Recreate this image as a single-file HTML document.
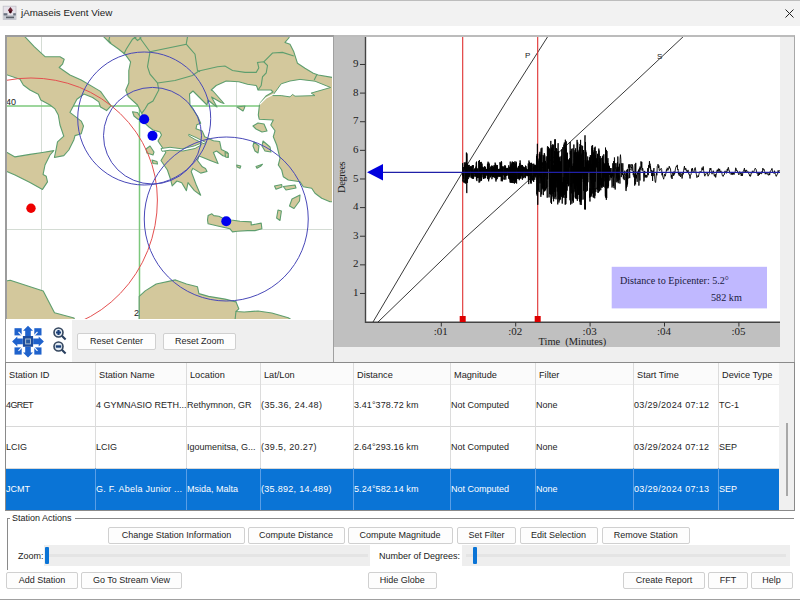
<!DOCTYPE html>
<html><head><meta charset="utf-8"><style>
html,body{margin:0;padding:0;width:800px;height:600px;overflow:hidden;background:#fff;font-family:"Liberation Sans", sans-serif}
.t{position:absolute;white-space:pre;line-height:1;font-family:"Liberation Sans", sans-serif}
.btn{position:absolute;box-sizing:border-box;border:1px solid #d0d0d0;border-radius:2px;background:#fdfdfd;text-align:center;color:#1e1e1e;font-family:"Liberation Sans", sans-serif;white-space:pre}
</style></head><body>
<div style="position:absolute;left:0;top:0;width:800px;height:26px;background:#f2f2f2;border-top:1px solid #bdbdbd;box-sizing:border-box"></div>
<svg width="20" height="24" style="position:absolute;left:0;top:0">
<rect x="3.2" y="6.2" width="12.8" height="13.4" fill="#e6e2ea" stroke="#c0c0c8" stroke-width="0.8"/>
<rect x="3.6" y="15" width="12" height="4.3" fill="#c4c8d0"/>
<rect x="3.6" y="13.2" width="3.8" height="2.2" fill="#68707e"/>
<rect x="13.2" y="13.2" width="2.6" height="2.2" fill="#68707e"/>
<rect x="6" y="16.6" width="8" height="1.6" fill="#5a606a"/>
<polygon points="10.4,7 12.9,10.3 10.4,13.6 7.9,10.3" fill="#6a2030"/>
<circle cx="10.4" cy="12" r="1.2" fill="#3a0a14"/>
</svg>
<div class="t" style="left:21px;top:8px;font-size:9.8px;color:#1a1a1a;">jAmaseis Event View</div>
<svg width="10" height="10" style="position:absolute;left:785px;top:9px"><path d="M0.5,0.5 L8.5,8.5 M8.5,0.5 L0.5,8.5" stroke="#222" stroke-width="1"/></svg>
<svg width="800" height="600" style="position:absolute;left:0;top:0">
<defs><clipPath id="mc"><rect x="6" y="36" width="326" height="283"/></clipPath></defs>
<g clip-path="url(#mc)">
<rect x="0" y="0" width="800" height="600" fill="#ffffff"/>
<line x1="41.5" y1="30" x2="41.5" y2="330" stroke="#d4dcd4" stroke-width="1"/>
<line x1="236.5" y1="30" x2="236.5" y2="330" stroke="#d4dcd4" stroke-width="1"/>
<line x1="0" y1="229.5" x2="340" y2="229.5" stroke="#d4dcd4" stroke-width="1"/>
<line x1="139.5" y1="30" x2="139.5" y2="330" stroke="#7cc87c" stroke-width="1.5"/>
<line x1="0" y1="106" x2="340" y2="106" stroke="#7cc87c" stroke-width="1.5"/>
<polygon points="5.0,35.0 23.3,35.0 34.2,46.7 45.0,56.7 60.0,56.7 64.2,59.2 62.5,64.2 59.2,67.5 70.0,75.0 81.2,80.0 100.5,91.4 104.9,97.5 111.0,105.8 106.6,110.6 100.5,107.1 98.8,101.9 92.6,97.5 83.9,94.0 76.9,99.2 69.9,112.4 81.2,121.1 83.5,126.0 81.2,133.8 75.0,135.6 73.8,140.0 68.8,150.0 63.8,155.6 54.4,157.5 56.2,148.8 57.5,141.9 63.8,136.2 60.0,125.0 58.3,115.0 55.0,108.9 50.0,105.0 40.8,100.0 38.3,94.2 30.0,90.0 23.3,85.0 20.0,79.2 5.0,74.2" fill="#d3c89c" stroke="#5e9e6e" stroke-width="1.1" stroke-linejoin="round"/>
<polygon points="5.0,151.2 15.0,156.9 30.0,154.4 42.5,152.5 53.8,150.6 50.0,155.0 45.0,165.0 43.1,174.4 46.2,176.2 47.5,181.9 42.5,189.4 30.0,182.5 15.0,175.0 5.0,170.6" fill="#d3c89c" stroke="#5e9e6e" stroke-width="1.1" stroke-linejoin="round"/>
<polygon points="100.0,35.0 290.0,35.0 288.8,38.0 285.0,42.4 290.0,44.2 293.8,51.8 297.5,63.3 305.0,68.3 313.3,73.3 318.3,75.0 333.0,77.5 333.0,201.7 330.0,201.7 321.7,198.3 315.0,193.3 311.7,188.3 303.3,186.7 300.0,181.7 288.3,180.0 283.3,176.7 281.7,170.0 278.3,165.0 280.0,158.3 276.7,145.0 273.3,136.7 275.0,130.8 270.8,125.0 273.3,120.0 259.2,119.2 258.3,115.0 259.5,104.5 261.0,102.0 266.0,96.0 273.0,92.0 271.0,90.0 258.0,90.0 257.0,87.0 256.2,85.5 247.5,84.2 238.8,81.8 226.2,81.0 216.2,85.5 211.2,90.0 213.0,91.0 224.0,103.5 221.0,102.5 211.5,97.0 217.0,107.0 213.5,104.5 208.0,100.0 207.0,105.0 195.0,93.0 193.0,91.0 189.5,94.0 190.0,105.0 192.0,108.0 197.5,116.0 200.7,123.2 196.8,124.8 196.0,128.8 202.3,131.1 204.7,136.7 213.4,140.7 219.7,141.5 221.3,149.4 227.6,152.5 228.4,157.3 222.9,155.7 216.6,151.0 213.4,152.5 218.1,163.6 210.2,160.5 202.3,157.3 199.0,156.0 197.5,160.5 202.3,166.8 205.5,168.4 207.0,171.5 200.7,173.1 192.8,168.4 191.2,171.5 196.0,184.2 200.7,195.3 194.4,190.6 188.0,182.7 186.4,190.6 181.7,182.7 176.9,181.0 172.2,185.8 170.6,179.5 167.4,170.0 161.0,160.5 165.8,152.5 162.0,147.0 158.0,141.0 161.5,135.0 160.0,132.0 153.0,130.0 149.0,127.0 145.0,123.3 141.7,113.3 140.0,110.0 137.5,105.0 128.3,96.7 125.8,90.0 128.8,83.0 128.8,70.5 130.6,61.8 125.0,54.2 118.8,49.2 110.0,43.0 103.8,36.8 100.0,35.5" fill="#d3c89c" stroke="#5e9e6e" stroke-width="1.1" stroke-linejoin="round"/>
<polygon points="5.0,281.2 10.2,280.2 43.2,291.0 54.5,312.7 74.0,318.0 76.0,325.0 5.0,325.0" fill="#d3c89c" stroke="#5e9e6e" stroke-width="1.1" stroke-linejoin="round"/>
<polygon points="139.2,296.4 145.2,290.9 156.2,284.0 175.5,279.9 186.5,284.0 197.5,286.8 198.9,293.6 208.5,296.4 225.0,299.1 236.0,301.9 238.8,308.8 236.0,311.5 244.2,312.0 258.0,311.0 271.8,313.0 288.2,317.8 300.0,325.0 139.2,325.0" fill="#d3c89c" stroke="#5e9e6e" stroke-width="1.1" stroke-linejoin="round"/>
<polygon points="132.5,111.7 137.5,112.5 141.0,118.3 138.3,119.5 134.0,116.0" fill="#d3c89c" stroke="#5e9e6e" stroke-width="1.1" stroke-linejoin="round"/>
<polygon points="146.0,149.0 150.0,146.0 154.0,152.0 153.0,155.0 147.0,153.0" fill="#d3c89c" stroke="#5e9e6e" stroke-width="1.1" stroke-linejoin="round"/>
<polygon points="152.0,160.0 157.0,161.5 157.5,164.0 153.0,163.5" fill="#d3c89c" stroke="#5e9e6e" stroke-width="1.1" stroke-linejoin="round"/>
<polygon points="237.0,107.0 245.0,106.0 244.0,109.0 243.0,111.0 240.0,109.0" fill="#d3c89c" stroke="#5e9e6e" stroke-width="1.1" stroke-linejoin="round"/>
<polygon points="253.0,126.0 258.0,123.0 264.0,124.0 267.0,131.0 262.0,132.0 256.0,129.0" fill="#d3c89c" stroke="#5e9e6e" stroke-width="1.1" stroke-linejoin="round"/>
<polygon points="254.0,142.0 259.0,146.0 258.0,153.0 255.0,151.0 253.0,146.0" fill="#d3c89c" stroke="#5e9e6e" stroke-width="1.1" stroke-linejoin="round"/>
<polygon points="263.0,141.0 270.0,147.0 271.0,152.0 265.0,151.0 262.0,146.0" fill="#d3c89c" stroke="#5e9e6e" stroke-width="1.1" stroke-linejoin="round"/>
<polygon points="225.0,152.5 228.3,153.5 228.0,157.5 225.5,157.0" fill="#d3c89c" stroke="#5e9e6e" stroke-width="1.1" stroke-linejoin="round"/>
<polygon points="236.7,165.0 240.8,166.0 240.0,168.3 237.0,167.0" fill="#d3c89c" stroke="#5e9e6e" stroke-width="1.1" stroke-linejoin="round"/>
<polygon points="256.0,166.5 262.5,164.2 261.0,166.0 257.0,168.3" fill="#d3c89c" stroke="#5e9e6e" stroke-width="1.1" stroke-linejoin="round"/>
<polygon points="274.5,186.0 281.7,184.5 282.0,187.0 276.0,189.2" fill="#d3c89c" stroke="#5e9e6e" stroke-width="1.1" stroke-linejoin="round"/>
<polygon points="283.3,186.5 295.0,185.0 296.0,188.0 286.0,190.0" fill="#d3c89c" stroke="#5e9e6e" stroke-width="1.1" stroke-linejoin="round"/>
<polygon points="292.0,199.0 300.0,195.0 299.5,201.0 294.0,208.5 289.5,206.0" fill="#d3c89c" stroke="#5e9e6e" stroke-width="1.1" stroke-linejoin="round"/>
<polygon points="278.0,210.0 281.4,211.0 280.0,220.5 276.6,218.0" fill="#d3c89c" stroke="#5e9e6e" stroke-width="1.1" stroke-linejoin="round"/>
<polygon points="208.1,215.6 211.9,213.8 213.8,215.6 218.8,216.2 222.5,218.1 231.2,220.0 240.0,221.2 251.2,221.9 251.2,225.0 261.2,223.1 261.9,228.8 255.0,230.6 247.5,230.6 237.5,231.2 232.5,231.9 230.0,228.8 218.8,226.2 208.1,223.8 207.5,220.0" fill="#d3c89c" stroke="#5e9e6e" stroke-width="1.1" stroke-linejoin="round"/>
<polygon points="161.0,148.5 170.0,147.3 182.0,148.8 194.0,146.0 200.7,143.3 201.5,144.8 195.0,148.5 183.0,151.0 170.0,150.2 162.0,151.3" fill="#ffffff" stroke="#5e9e6e" stroke-width="1"/>
<polygon points="188.8,134.3 196.0,137.5 205.5,142.3 204.5,144.0 195.0,139.5 188.8,135.8" fill="#ffffff" stroke="#5e9e6e" stroke-width="1"/>
<polygon points="272.5,95.6 276.0,91.0 281.2,83.8 290.0,81.0 300.0,79.4 315.0,81.2 330.6,87.5 311.2,93.1 315.0,95.6 295.0,96.2 292.5,94.4 290.0,96.9 281.2,95.6" fill="#ffffff" stroke="#5e9e6e" stroke-width="1"/>
<polyline points="259.5,104.5 266,98 274,94" fill="none" stroke="#ffffff" stroke-width="1.2"/>
<polyline points="110.0,35.5 108.8,40.5 111.0,43.0" fill="none" stroke="#5e9e6e" stroke-width="1.1"/>
<polyline points="137.5,36.0 132.5,39.2 126.2,49.2 123.8,54.2" fill="none" stroke="#5e9e6e" stroke-width="1.1"/>
<polyline points="134.0,37.0 137.5,40.5 141.0,38.0 138.8,36.0" fill="none" stroke="#5e9e6e" stroke-width="1.1"/>
<polyline points="140.0,38.0 150.0,51.8 147.5,66.8 150.0,74.2 157.5,83.0 158.8,90.0 153.0,101.0 148.0,104.0 145.0,109.0 141.7,113.3" fill="none" stroke="#5e9e6e" stroke-width="1.1"/>
<polyline points="150.0,51.8 186.2,44.2 187.5,36.8 186.2,35.0" fill="none" stroke="#5e9e6e" stroke-width="1.1"/>
<polyline points="186.2,44.2 195.0,54.2 197.5,70.5 200.0,71.8" fill="none" stroke="#5e9e6e" stroke-width="1.1"/>
<polyline points="157.5,83.0 175.0,80.5 192.5,75.5 198.8,71.0" fill="none" stroke="#5e9e6e" stroke-width="1.1"/>
<polyline points="198.8,71.0 217.5,66.8 225.0,66.0 232.5,70.5 245.0,72.4 256.2,72.4 258.8,68.0 257.5,62.4 263.8,61.8 267.5,65.5 266.2,73.0 262.5,76.8 261.2,85.5 258.0,90.0" fill="none" stroke="#5e9e6e" stroke-width="1.1"/>
<polyline points="263.8,61.8 272.5,53.0 282.5,52.4 293.8,56.0" fill="none" stroke="#5e9e6e" stroke-width="1.1"/>
<polyline points="316.7,75.0 314.2,80.0" fill="none" stroke="#5e9e6e" stroke-width="1.1"/>
<polyline points="236.0,311.5 235.0,320.0" fill="none" stroke="#5e9e6e" stroke-width="1.1"/>
<text x="6" y="104.5" font-family="Liberation Sans" font-size="9" fill="#222">40</text>
<text x="134" y="316" font-family="Liberation Sans" font-size="9" fill="#222">2</text>
<path d="M -95.4,200 A 126.4 122 0 0 1 157.4,200 A 126.4 132 0 0 1 -95.4,200" fill="none" stroke="#e45050" stroke-width="1"/>
<ellipse cx="144.2" cy="118.5" rx="66.5" ry="66.5" fill="none" stroke="#4848b8" stroke-width="1"/>
<ellipse cx="152.5" cy="135.7" rx="49" ry="48.3" fill="none" stroke="#4848b8" stroke-width="1"/>
<circle cx="226.25" cy="219" r="82" fill="none" stroke="#4848b8" stroke-width="1"/>
<circle cx="31" cy="208.3" r="4.7" fill="#ee0000"/>
<circle cx="144.2" cy="119.2" r="5" fill="#0000ee"/>
<circle cx="152.5" cy="135.8" r="5" fill="#0000ee"/>
<circle cx="226.25" cy="221.25" r="5" fill="#0000ee"/>
</g></svg>
<svg width="800" height="600" style="position:absolute;left:0;top:0">
<rect x="333" y="35" width="462" height="328" fill="#efefef"/>
<rect x="333" y="36" width="447" height="311" fill="#c0c0c0"/>
<rect x="366" y="36" width="414" height="286" fill="#ffffff"/>
<line x1="365.5" y1="35" x2="365.5" y2="323" stroke="#444" stroke-width="1.4"/>
<line x1="365" y1="322.2" x2="780" y2="322.2" stroke="#444" stroke-width="1.4"/>
<line x1="360" y1="293.48" x2="365" y2="293.48" stroke="#333" stroke-width="1"/>
<text x="358.5" y="296.08" text-anchor="end" font-family="Liberation Serif" font-size="11" fill="#222">1</text>
<line x1="360" y1="264.85" x2="365" y2="264.85" stroke="#333" stroke-width="1"/>
<text x="358.5" y="267.45" text-anchor="end" font-family="Liberation Serif" font-size="11" fill="#222">2</text>
<line x1="360" y1="236.23" x2="365" y2="236.23" stroke="#333" stroke-width="1"/>
<text x="358.5" y="238.83" text-anchor="end" font-family="Liberation Serif" font-size="11" fill="#222">3</text>
<line x1="360" y1="207.60" x2="365" y2="207.60" stroke="#333" stroke-width="1"/>
<text x="358.5" y="210.20" text-anchor="end" font-family="Liberation Serif" font-size="11" fill="#222">4</text>
<line x1="360" y1="178.98" x2="365" y2="178.98" stroke="#333" stroke-width="1"/>
<text x="358.5" y="181.58" text-anchor="end" font-family="Liberation Serif" font-size="11" fill="#222">5</text>
<line x1="360" y1="150.35" x2="365" y2="150.35" stroke="#333" stroke-width="1"/>
<text x="358.5" y="152.95" text-anchor="end" font-family="Liberation Serif" font-size="11" fill="#222">6</text>
<line x1="360" y1="121.73" x2="365" y2="121.73" stroke="#333" stroke-width="1"/>
<text x="358.5" y="124.33" text-anchor="end" font-family="Liberation Serif" font-size="11" fill="#222">7</text>
<line x1="360" y1="93.10" x2="365" y2="93.10" stroke="#333" stroke-width="1"/>
<text x="358.5" y="95.70" text-anchor="end" font-family="Liberation Serif" font-size="11" fill="#222">8</text>
<line x1="360" y1="64.48" x2="365" y2="64.48" stroke="#333" stroke-width="1"/>
<text x="358.5" y="67.08" text-anchor="end" font-family="Liberation Serif" font-size="11" fill="#222">9</text>
<text transform="translate(344.5,193) rotate(-90)" font-family="Liberation Serif" font-size="10.5" letter-spacing="-0.45" fill="#222">Degrees</text>
<line x1="441.30" y1="322" x2="441.30" y2="326.5" stroke="#333" stroke-width="1"/>
<text x="433.80" y="335" font-family="Liberation Serif" font-size="11" fill="#222">:01</text>
<line x1="515.70" y1="322" x2="515.70" y2="326.5" stroke="#333" stroke-width="1"/>
<text x="508.20" y="335" font-family="Liberation Serif" font-size="11" fill="#222">:02</text>
<line x1="590.10" y1="322" x2="590.10" y2="326.5" stroke="#333" stroke-width="1"/>
<text x="582.60" y="335" font-family="Liberation Serif" font-size="11" fill="#222">:03</text>
<line x1="664.50" y1="322" x2="664.50" y2="326.5" stroke="#333" stroke-width="1"/>
<text x="657.00" y="335" font-family="Liberation Serif" font-size="11" fill="#222">:04</text>
<line x1="738.90" y1="322" x2="738.90" y2="326.5" stroke="#333" stroke-width="1"/>
<text x="731.40" y="335" font-family="Liberation Serif" font-size="11" fill="#222">:05</text>
<text x="538.6" y="345" font-family="Liberation Serif" font-size="10.4" fill="#222" style="white-space:pre">Time  (Minutes)</text>
<path d="M373,322 Q464.5,165.5 548.75,35" fill="none" stroke="#222" stroke-width="0.9"/>
<polyline points="378,322 462.7,240 537.7,172 633.75,83 685,35" fill="none" stroke="#222" stroke-width="0.9"/>
<text x="525" y="58" font-family="Liberation Sans" font-size="8" fill="#222">P</text>
<text x="657" y="58.5" font-family="Liberation Sans" font-size="8" fill="#222">S</text>
<line x1="462.7" y1="35" x2="462.7" y2="322" stroke="#e03030" stroke-width="1.1"/>
<line x1="537.7" y1="35" x2="537.7" y2="322" stroke="#e03030" stroke-width="1.1"/>
<rect x="459.7" y="316" width="6" height="6" fill="#dd0000"/>
<rect x="534.7" y="316" width="6" height="6" fill="#dd0000"/>
<path d="M462.50,176.3 L462.62,163.2 L462.74,166.3 L462.86,181.5 L462.98,179.6 L463.10,176.6 L463.22,176.5 L463.34,173.8 L463.46,177.2 L463.58,178.5 L463.70,167.0 L463.82,180.0 L463.94,182.4 L464.06,180.6 L464.18,182.7 L464.30,162.4 L464.42,164.3 L464.54,169.0 L464.66,165.8 L464.78,167.7 L464.90,176.2 L465.02,182.2 L465.14,182.6 L465.26,183.4 L465.38,163.4 L465.50,183.1 L465.62,175.7 L465.74,164.2 L465.86,175.9 L465.98,161.9 L466.10,183.4 L466.22,180.6 L466.34,152.6 L466.46,152.6 L466.58,161.4 L466.70,192.6 L466.82,193.1 L466.94,153.5 L467.06,161.7 L467.18,168.3 L467.30,163.5 L467.42,181.5 L467.54,182.8 L467.66,167.5 L467.78,173.9 L467.90,176.4 L468.02,177.0 L468.14,173.2 L468.26,179.1 L468.38,165.9 L468.50,169.7 L468.62,164.9 L468.74,175.7 L468.86,175.6 L468.98,176.4 L469.10,176.8 L469.22,164.9 L469.34,176.4 L469.46,167.3 L469.58,175.1 L469.70,168.8 L469.82,168.9 L469.94,167.9 L470.06,177.6 L470.18,174.6 L470.30,167.6 L470.42,170.3 L470.54,166.3 L470.66,168.7 L470.78,170.3 L470.90,166.9 L471.02,175.6 L471.14,170.6 L471.26,166.5 L471.38,167.1 L471.50,177.6 L471.62,177.6 L471.74,166.4 L471.86,177.5 L471.98,168.8 L472.10,169.9 L472.22,178.7 L472.34,165.2 L472.46,178.3 L472.58,170.2 L472.70,178.2 L472.82,173.4 L472.94,168.5 L473.06,165.4 L473.18,167.8 L473.30,165.2 L473.42,176.6 L473.54,178.8 L473.66,174.7 L473.78,177.2 L473.90,170.7 L474.02,174.1 L474.14,169.3 L474.26,171.6 L474.38,170.1 L474.50,173.2 L474.62,168.8 L474.74,176.4 L474.86,175.8 L474.98,174.3 L475.10,168.1 L475.22,169.5 L475.34,170.8 L475.46,175.5 L475.58,168.1 L475.70,168.5 L475.82,176.7 L475.94,166.6 L476.06,176.4 L476.18,163.4 L476.30,162.3 L476.42,179.5 L476.54,161.6 L476.66,167.1 L476.78,180.7 L476.90,181.1 L477.02,168.7 L477.14,171.7 L477.26,168.4 L477.38,176.1 L477.50,170.1 L477.62,178.0 L477.74,169.3 L477.86,177.2 L477.98,170.9 L478.10,177.4 L478.22,178.1 L478.34,175.8 L478.46,174.3 L478.58,174.7 L478.70,161.0 L478.82,162.4 L478.94,182.6 L479.06,182.6 L479.18,182.5 L479.30,176.6 L479.42,160.0 L479.54,173.6 L479.66,165.5 L479.78,182.2 L479.90,162.5 L480.02,177.6 L480.14,167.2 L480.26,167.3 L480.38,168.0 L480.50,172.5 L480.62,167.8 L480.74,162.1 L480.86,180.9 L480.98,174.0 L481.10,178.3 L481.22,161.9 L481.34,180.7 L481.46,174.0 L481.58,180.1 L481.70,164.2 L481.82,176.7 L481.94,163.5 L482.06,169.9 L482.18,174.6 L482.30,167.5 L482.42,171.3 L482.54,167.1 L482.66,168.7 L482.78,166.8 L482.90,171.3 L483.02,171.0 L483.14,177.5 L483.26,171.4 L483.38,178.8 L483.50,167.6 L483.62,176.5 L483.74,178.8 L483.86,167.7 L483.98,167.9 L484.10,176.3 L484.22,178.3 L484.34,178.0 L484.46,170.1 L484.58,166.2 L484.70,177.7 L484.82,169.1 L484.94,170.4 L485.06,167.7 L485.18,178.3 L485.30,173.8 L485.42,168.3 L485.54,166.8 L485.66,177.9 L485.78,175.0 L485.90,174.4 L486.02,175.3 L486.14,174.9 L486.26,174.4 L486.38,168.9 L486.50,170.4 L486.62,174.4 L486.74,169.3 L486.86,174.1 L486.98,175.7 L487.10,169.0 L487.22,175.3 L487.34,169.8 L487.46,163.7 L487.58,179.1 L487.70,174.9 L487.82,167.1 L487.94,167.6 L488.06,161.7 L488.18,164.9 L488.30,166.9 L488.42,168.1 L488.54,180.1 L488.66,181.3 L488.78,165.3 L488.90,162.7 L489.02,179.3 L489.14,163.9 L489.26,174.4 L489.38,170.1 L489.50,173.3 L489.62,168.1 L489.74,176.4 L489.86,176.6 L489.98,177.7 L490.10,173.8 L490.22,174.9 L490.34,175.5 L490.46,177.0 L490.58,174.5 L490.70,166.6 L490.82,175.2 L490.94,173.2 L491.06,168.0 L491.18,166.8 L491.30,175.0 L491.42,174.0 L491.54,175.6 L491.66,168.8 L491.78,165.5 L491.90,179.2 L492.02,178.6 L492.14,166.1 L492.26,175.2 L492.38,176.9 L492.50,168.5 L492.62,177.1 L492.74,166.2 L492.86,165.9 L492.98,166.7 L493.10,176.4 L493.22,170.0 L493.34,168.3 L493.46,177.1 L493.58,166.9 L493.70,176.6 L493.82,169.1 L493.94,174.9 L494.06,165.2 L494.18,177.4 L494.30,170.7 L494.42,167.2 L494.54,169.7 L494.66,165.4 L494.78,166.7 L494.90,178.1 L495.02,168.6 L495.14,162.6 L495.26,165.2 L495.38,170.6 L495.50,176.6 L495.62,163.8 L495.74,178.6 L495.86,179.5 L495.98,181.5 L496.10,165.7 L496.22,179.9 L496.34,167.3 L496.46,177.8 L496.58,165.6 L496.70,165.1 L496.82,176.0 L496.94,166.7 L497.06,171.1 L497.18,179.1 L497.30,165.0 L497.42,169.2 L497.54,167.8 L497.66,169.6 L497.78,177.1 L497.90,175.7 L498.02,176.4 L498.14,177.1 L498.26,170.5 L498.38,176.0 L498.50,169.0 L498.62,175.5 L498.74,175.4 L498.86,171.7 L498.98,175.4 L499.10,171.3 L499.22,175.1 L499.34,168.7 L499.46,174.8 L499.58,176.7 L499.70,176.9 L499.82,169.6 L499.94,175.8 L500.06,162.0 L500.18,164.6 L500.30,163.1 L500.42,176.3 L500.54,164.4 L500.66,164.2 L500.78,168.5 L500.90,176.8 L501.02,174.6 L501.14,163.5 L501.26,181.2 L501.38,161.2 L501.50,163.8 L501.62,162.1 L501.74,164.2 L501.86,177.1 L501.98,180.1 L502.10,166.6 L502.22,169.3 L502.34,181.3 L502.46,171.0 L502.58,166.5 L502.70,171.5 L502.82,174.0 L502.94,170.2 L503.06,174.8 L503.18,169.2 L503.30,169.0 L503.42,166.5 L503.54,167.3 L503.66,175.3 L503.78,173.8 L503.90,179.3 L504.02,179.3 L504.14,177.5 L504.26,179.7 L504.38,167.9 L504.50,166.6 L504.62,176.9 L504.74,173.4 L504.86,165.2 L504.98,167.7 L505.10,168.6 L505.22,177.2 L505.34,165.8 L505.46,169.7 L505.58,166.3 L505.70,176.6 L505.82,179.6 L505.94,169.0 L506.06,173.3 L506.18,175.9 L506.30,171.4 L506.42,175.6 L506.54,169.3 L506.66,167.9 L506.78,173.1 L506.90,168.8 L507.02,169.1 L507.14,171.4 L507.26,175.5 L507.38,168.0 L507.50,167.9 L507.62,170.0 L507.74,170.0 L507.86,171.1 L507.98,169.0 L508.10,173.8 L508.22,175.4 L508.34,170.0 L508.46,174.7 L508.58,172.6 L508.70,165.3 L508.82,178.5 L508.94,170.9 L509.06,178.8 L509.18,175.1 L509.30,173.3 L509.42,166.8 L509.54,179.4 L509.66,169.7 L509.78,170.6 L509.90,170.6 L510.02,181.3 L510.14,182.5 L510.26,161.6 L510.38,175.1 L510.50,165.5 L510.62,182.2 L510.74,178.1 L510.86,173.6 L510.98,182.9 L511.10,164.0 L511.22,163.8 L511.34,181.0 L511.46,165.3 L511.58,182.7 L511.70,167.9 L511.82,164.8 L511.94,162.5 L512.06,179.4 L512.18,177.2 L512.30,161.5 L512.42,182.7 L512.54,165.4 L512.66,165.4 L512.78,162.0 L512.90,182.6 L513.02,181.9 L513.14,183.1 L513.26,177.5 L513.38,162.1 L513.50,163.9 L513.62,180.7 L513.74,162.0 L513.86,174.5 L513.98,162.9 L514.10,183.0 L514.22,163.2 L514.34,163.9 L514.46,183.6 L514.58,164.8 L514.70,182.9 L514.82,178.9 L514.94,161.3 L515.06,179.7 L515.18,175.7 L515.30,174.7 L515.42,174.6 L515.54,164.0 L515.66,182.7 L515.78,163.7 L515.90,181.3 L516.02,165.1 L516.14,161.7 L516.26,168.2 L516.38,162.6 L516.50,181.7 L516.62,183.5 L516.74,173.8 L516.86,166.8 L516.98,168.7 L517.10,169.4 L517.22,169.1 L517.34,178.9 L517.46,177.8 L517.58,168.3 L517.70,168.1 L517.82,172.4 L517.94,168.9 L518.06,168.2 L518.18,170.7 L518.30,173.6 L518.42,178.9 L518.54,170.4 L518.66,166.1 L518.78,177.7 L518.90,166.3 L519.02,175.6 L519.14,168.3 L519.26,180.2 L519.38,164.7 L519.50,167.2 L519.62,178.8 L519.74,176.8 L519.86,163.0 L519.98,177.8 L520.10,160.4 L520.22,164.3 L520.34,175.2 L520.46,178.2 L520.58,170.2 L520.70,166.0 L520.82,169.1 L520.94,178.7 L521.06,166.7 L521.18,175.1 L521.30,165.1 L521.42,164.9 L521.54,166.7 L521.66,169.3 L521.78,170.1 L521.90,176.1 L522.02,165.8 L522.14,176.5 L522.26,170.3 L522.38,179.7 L522.50,165.0 L522.62,169.2 L522.74,174.3 L522.86,167.9 L522.98,167.0 L523.10,166.5 L523.22,173.3 L523.34,166.9 L523.46,171.2 L523.58,173.6 L523.70,178.2 L523.82,173.4 L523.94,168.8 L524.06,167.3 L524.18,174.9 L524.30,176.4 L524.42,177.2 L524.54,167.9 L524.66,170.5 L524.78,167.8 L524.90,168.0 L525.02,169.5 L525.14,166.9 L525.26,172.1 L525.38,178.1 L525.50,165.6 L525.62,169.4 L525.74,167.6 L525.86,176.4 L525.98,166.1 L526.10,175.1 L526.22,174.8 L526.34,168.6 L526.46,170.4 L526.58,174.1 L526.70,171.0 L526.82,175.7 L526.94,171.8 L527.06,169.3 L527.18,175.0 L527.30,176.0 L527.42,169.9 L527.54,171.7 L527.66,175.2 L527.78,175.3 L527.90,174.9 L528.02,169.2 L528.14,176.4 L528.26,163.5 L528.38,180.4 L528.50,165.5 L528.62,182.5 L528.74,184.1 L528.86,180.2 L528.98,160.5 L529.10,179.9 L529.22,170.5 L529.34,164.4 L529.46,175.7 L529.58,162.0 L529.70,165.8 L529.82,163.0 L529.94,163.4 L530.06,176.2 L530.18,163.1 L530.30,174.8 L530.42,182.1 L530.54,167.7 L530.66,165.0 L530.78,183.2 L530.90,183.3 L531.02,168.8 L531.14,183.6 L531.26,176.0 L531.38,179.1 L531.50,162.8 L531.62,179.4 L531.74,169.8 L531.86,166.6 L531.98,163.8 L532.10,165.5 L532.22,167.5 L532.34,179.3 L532.46,178.3 L532.58,180.3 L532.70,174.8 L532.82,167.9 L532.94,163.9 L533.06,164.5 L533.18,173.0 L533.30,181.0 L533.42,167.5 L533.54,175.2 L533.66,182.0 L533.78,163.7 L533.90,166.2 L534.02,176.3 L534.14,166.3 L534.26,175.6 L534.38,166.0 L534.50,165.5 L534.62,169.3 L534.74,179.8 L534.86,167.4 L534.98,164.7 L535.10,176.7 L535.22,165.0 L535.34,168.3 L535.46,165.7 L535.58,176.0 L535.70,167.3 L535.82,177.5 L535.94,167.4 L536.06,166.1 L536.18,174.5 L536.30,175.0 L536.42,165.4 L536.54,155.8 L536.66,182.2 L536.78,194.4 L536.90,188.9 L537.02,177.2 L537.14,154.0 L537.26,196.0 L537.38,143.8 L537.50,183.3 L537.62,163.1 L537.74,204.8 L537.86,172.0 L537.98,158.6 L538.10,165.1 L538.22,168.8 L538.34,184.5 L538.46,190.5 L538.58,183.3 L538.70,168.7 L538.82,160.6 L538.94,181.3 L539.06,192.0 L539.18,192.0 L539.30,153.8 L539.42,176.2 L539.54,174.1 L539.66,153.8 L539.78,174.5 L539.90,151.8 L540.02,183.3 L540.14,165.5 L540.26,178.1 L540.38,157.6 L540.50,155.6 L540.62,155.5 L540.74,184.9 L540.86,196.8 L540.98,153.3 L541.10,148.3 L541.22,181.2 L541.34,154.9 L541.46,149.6 L541.58,173.1 L541.70,194.4 L541.82,159.2 L541.94,147.7 L542.06,189.4 L542.18,188.4 L542.30,181.5 L542.42,186.9 L542.54,188.3 L542.66,162.3 L542.78,165.3 L542.90,163.1 L543.02,186.4 L543.14,154.9 L543.26,189.5 L543.38,195.1 L543.50,179.5 L543.62,160.7 L543.74,189.7 L543.86,156.3 L543.98,187.6 L544.10,161.5 L544.22,190.2 L544.34,153.1 L544.46,161.5 L544.58,191.4 L544.70,154.7 L544.82,159.1 L544.94,190.4 L545.06,189.5 L545.18,161.1 L545.30,176.8 L545.42,164.7 L545.54,160.9 L545.66,190.3 L545.78,187.3 L545.90,188.7 L546.02,187.5 L546.14,157.7 L546.26,156.4 L546.38,161.5 L546.50,188.2 L546.62,187.7 L546.74,181.1 L546.86,187.2 L546.98,163.9 L547.10,182.1 L547.22,197.7 L547.34,148.6 L547.46,146.3 L547.58,179.3 L547.70,156.6 L547.82,168.8 L547.94,163.6 L548.06,168.3 L548.18,148.6 L548.30,167.8 L548.42,160.4 L548.54,146.9 L548.66,168.5 L548.78,166.0 L548.90,187.8 L549.02,197.4 L549.14,193.6 L549.26,191.1 L549.38,149.1 L549.50,192.7 L549.62,194.0 L549.74,148.3 L549.86,150.0 L549.98,166.0 L550.10,191.1 L550.22,186.1 L550.34,178.6 L550.46,194.5 L550.58,149.3 L550.70,148.6 L550.82,140.9 L550.94,202.7 L551.06,191.6 L551.18,186.3 L551.30,191.2 L551.42,147.7 L551.54,204.0 L551.66,183.8 L551.78,198.7 L551.90,177.3 L552.02,145.1 L552.14,196.5 L552.26,152.3 L552.38,146.4 L552.50,162.9 L552.62,177.1 L552.74,194.1 L552.86,144.1 L552.98,191.8 L553.10,160.8 L553.22,162.8 L553.34,145.1 L553.46,184.2 L553.58,201.3 L553.70,165.3 L553.82,184.3 L553.94,170.4 L554.06,169.6 L554.18,198.8 L554.30,168.3 L554.42,192.0 L554.54,151.2 L554.66,181.7 L554.78,139.4 L554.90,148.0 L555.02,164.5 L555.14,152.7 L555.26,197.2 L555.38,139.4 L555.50,168.9 L555.62,196.0 L555.74,152.9 L555.86,183.7 L555.98,199.3 L556.10,155.9 L556.22,180.9 L556.34,148.1 L556.46,149.9 L556.58,180.8 L556.70,187.4 L556.82,148.9 L556.94,154.7 L557.06,151.6 L557.18,155.5 L557.30,191.6 L557.42,151.8 L557.54,187.0 L557.66,195.2 L557.78,204.4 L557.90,153.5 L558.02,147.0 L558.14,143.2 L558.26,159.4 L558.38,194.6 L558.50,198.8 L558.62,151.3 L558.74,162.1 L558.86,200.3 L558.98,202.5 L559.10,156.7 L559.22,194.0 L559.34,157.6 L559.46,186.0 L559.58,200.5 L559.70,188.3 L559.82,198.7 L559.94,182.0 L560.06,195.9 L560.18,193.7 L560.30,199.6 L560.42,161.3 L560.54,185.9 L560.66,190.9 L560.78,193.7 L560.90,156.5 L561.02,186.4 L561.14,180.1 L561.26,185.3 L561.38,155.7 L561.50,195.9 L561.62,196.8 L561.74,149.4 L561.86,177.4 L561.98,183.6 L562.10,187.7 L562.22,203.6 L562.34,182.2 L562.46,188.2 L562.58,198.2 L562.70,195.5 L562.82,147.1 L562.94,152.9 L563.06,194.5 L563.18,192.3 L563.30,177.1 L563.42,196.8 L563.54,192.5 L563.66,195.2 L563.78,181.1 L563.90,144.6 L564.02,198.0 L564.14,155.8 L564.26,142.7 L564.38,142.5 L564.50,194.9 L564.62,179.9 L564.74,184.0 L564.86,194.3 L564.98,183.1 L565.10,154.7 L565.22,204.7 L565.34,139.7 L565.46,149.5 L565.58,148.3 L565.70,194.7 L565.82,204.1 L565.94,200.8 L566.06,148.6 L566.18,161.0 L566.30,141.4 L566.42,181.6 L566.54,197.9 L566.66,190.6 L566.78,155.1 L566.90,182.5 L567.02,190.7 L567.14,190.2 L567.26,188.8 L567.38,152.7 L567.50,181.7 L567.62,184.1 L567.74,176.2 L567.86,180.6 L567.98,167.7 L568.10,159.4 L568.22,169.2 L568.34,186.3 L568.46,181.6 L568.58,162.2 L568.70,186.0 L568.82,160.1 L568.94,184.8 L569.06,167.1 L569.18,159.9 L569.30,167.4 L569.42,159.4 L569.54,158.3 L569.66,162.4 L569.78,191.1 L569.90,198.0 L570.02,200.3 L570.14,142.0 L570.26,154.3 L570.38,151.2 L570.50,152.4 L570.62,204.6 L570.74,198.9 L570.86,192.0 L570.98,150.8 L571.10,180.2 L571.22,193.4 L571.34,183.2 L571.46,186.8 L571.58,151.0 L571.70,148.8 L571.82,203.7 L571.94,203.5 L572.06,202.8 L572.18,194.1 L572.30,165.9 L572.42,199.6 L572.54,195.5 L572.66,190.3 L572.78,200.8 L572.90,148.4 L573.02,158.7 L573.14,183.4 L573.26,163.5 L573.38,202.6 L573.50,194.5 L573.62,190.7 L573.74,192.3 L573.86,144.5 L573.98,184.7 L574.10,190.5 L574.22,191.4 L574.34,152.4 L574.46,171.0 L574.58,158.9 L574.70,180.2 L574.82,188.8 L574.94,180.7 L575.06,150.4 L575.18,197.4 L575.30,150.2 L575.42,198.5 L575.54,148.4 L575.66,188.2 L575.78,160.2 L575.90,159.1 L576.02,198.1 L576.14,184.5 L576.26,156.9 L576.38,185.6 L576.50,169.8 L576.62,152.2 L576.74,199.1 L576.86,154.2 L576.98,147.6 L577.10,139.9 L577.22,153.5 L577.34,200.8 L577.46,160.1 L577.58,194.3 L577.70,142.5 L577.82,199.1 L577.94,154.7 L578.06,158.7 L578.18,194.5 L578.30,151.5 L578.42,157.5 L578.54,193.0 L578.66,158.3 L578.78,194.9 L578.90,158.8 L579.02,153.5 L579.14,149.8 L579.26,184.0 L579.38,173.4 L579.50,152.1 L579.62,201.5 L579.74,146.8 L579.86,197.9 L579.98,144.0 L580.10,146.1 L580.22,204.6 L580.34,194.2 L580.46,198.9 L580.58,139.9 L580.70,202.3 L580.82,164.5 L580.94,155.3 L581.06,195.4 L581.18,205.0 L581.30,199.2 L581.42,168.2 L581.54,154.6 L581.66,200.1 L581.78,145.3 L581.90,175.4 L582.02,156.5 L582.14,156.1 L582.26,152.9 L582.38,154.5 L582.50,148.4 L582.62,146.2 L582.74,177.2 L582.86,178.9 L582.98,154.9 L583.10,199.5 L583.22,161.7 L583.34,182.0 L583.46,150.0 L583.58,190.9 L583.70,158.7 L583.82,151.9 L583.94,183.8 L584.06,176.2 L584.18,180.9 L584.30,166.9 L584.42,181.9 L584.54,175.5 L584.66,195.2 L584.78,209.3 L584.90,140.3 L585.02,135.3 L585.14,209.3 L585.26,160.0 L585.38,209.3 L585.50,142.0 L585.62,175.2 L585.74,150.4 L585.86,166.9 L585.98,180.7 L586.10,152.4 L586.22,168.0 L586.34,191.6 L586.46,162.5 L586.58,166.5 L586.70,163.5 L586.82,178.8 L586.94,185.9 L587.06,160.5 L587.18,167.1 L587.30,160.1 L587.42,166.2 L587.54,190.7 L587.66,156.5 L587.78,157.9 L587.90,181.4 L588.02,182.2 L588.14,177.2 L588.26,169.3 L588.38,160.5 L588.50,172.8 L588.62,164.0 L588.74,166.2 L588.86,164.8 L588.98,167.5 L589.10,165.6 L589.22,173.0 L589.34,161.3 L589.46,165.3 L589.58,157.3 L589.70,197.7 L589.82,193.8 L589.94,201.5 L590.06,188.3 L590.18,196.8 L590.30,155.3 L590.42,179.4 L590.54,158.1 L590.66,188.4 L590.78,193.4 L590.90,197.0 L591.02,155.0 L591.14,182.9 L591.26,188.2 L591.38,195.7 L591.50,164.5 L591.62,183.2 L591.74,156.0 L591.86,145.8 L591.98,193.6 L592.10,147.8 L592.22,160.3 L592.34,181.9 L592.46,157.5 L592.58,145.2 L592.70,190.0 L592.82,182.7 L592.94,193.3 L593.06,152.7 L593.18,197.1 L593.30,152.4 L593.42,197.6 L593.54,190.8 L593.66,155.5 L593.78,157.0 L593.90,174.6 L594.02,150.3 L594.14,187.4 L594.26,147.7 L594.38,155.5 L594.50,189.1 L594.62,197.0 L594.74,198.3 L594.86,187.9 L594.98,195.7 L595.10,147.3 L595.22,146.7 L595.34,181.6 L595.46,155.1 L595.58,160.2 L595.70,158.3 L595.82,191.9 L595.94,183.0 L596.06,151.0 L596.18,161.3 L596.30,164.4 L596.42,160.2 L596.54,158.4 L596.66,167.4 L596.78,162.3 L596.90,163.1 L597.02,189.0 L597.14,187.7 L597.26,189.6 L597.38,176.1 L597.50,153.8 L597.62,189.5 L597.74,174.0 L597.86,154.8 L597.98,192.8 L598.10,180.6 L598.22,187.5 L598.34,192.5 L598.46,187.9 L598.58,161.9 L598.70,162.5 L598.82,148.6 L598.94,188.0 L599.06,150.5 L599.18,155.3 L599.30,154.7 L599.42,178.2 L599.54,191.3 L599.66,158.1 L599.78,184.7 L599.90,171.3 L600.02,161.4 L600.14,176.7 L600.26,156.0 L600.38,164.2 L600.50,185.0 L600.62,159.1 L600.74,190.2 L600.86,178.6 L600.98,185.3 L601.10,186.6 L601.22,186.4 L601.34,178.1 L601.46,187.4 L601.86,158.0 L601.98,182.9 L602.10,187.8 L602.22,172.9 L602.34,156.6 L602.46,158.9 L602.58,163.0 L602.70,185.9 L602.82,155.7 L602.94,185.1 L603.06,186.7 L603.18,179.4 L603.30,176.4 L603.42,161.9 L603.54,163.5 L603.66,186.7 L603.78,154.3 L603.90,156.5 L604.02,175.7 L604.14,181.3 L604.26,164.2 L604.38,177.3 L604.78,163.3 L604.90,167.0 L605.02,187.7 L605.14,174.7 L605.26,191.5 L605.38,196.4 L605.50,147.6 L605.62,192.0 L605.74,197.7 L605.86,188.7 L605.98,152.7 L606.10,185.2 L606.22,177.9 L606.34,199.8 L606.46,149.9 L606.58,183.1 L606.70,198.0 L606.82,174.8 L606.94,151.1 L607.06,188.4 L607.18,160.7 L607.30,187.6 L607.42,173.5 L607.82,173.4 L607.94,158.2 L608.06,188.2 L608.18,186.5 L608.30,163.4 L608.42,163.2 L608.54,186.4 L608.94,166.7 L609.06,175.0 L609.18,165.7 L609.30,175.2 L609.42,166.7 L609.54,175.3 L609.66,180.6 L610.06,180.3 L610.46,176.8 L610.58,168.2 L610.70,176.8 L610.82,174.7 L610.94,176.6 L611.06,168.1 L611.18,176.2 L611.30,178.0 L611.42,174.0 L611.54,174.9 L611.66,173.2 L612.06,187.5 L612.18,186.1 L612.30,173.2 L612.42,176.4 L612.82,163.6 L612.94,163.2 L613.06,175.3 L613.18,182.5 L613.30,186.2 L613.42,180.6 L613.54,181.6 L613.66,161.1 L613.78,179.8 L613.90,180.0 L614.02,188.1 L614.42,157.5 L614.54,158.7 L614.66,176.0 L615.06,178.5 L615.18,189.5 L615.30,182.7 L615.70,163.2 L615.82,168.6 L616.22,167.4 L616.62,178.2 L616.74,182.3 L616.86,169.2 L616.98,178.2 L617.10,163.4 L617.22,179.2 L617.34,165.8 L617.46,162.1 L617.58,169.4 L617.70,181.5 L617.82,156.5 L618.22,183.2 L618.34,179.4 L618.46,180.2 L618.58,179.7 L618.70,166.8 L618.82,178.4 L618.94,175.3 L619.06,179.9 L619.18,168.8 L619.30,170.0 L619.42,163.7 L619.82,179.1 L619.94,183.6 L620.06,159.0 L620.46,154.7 L620.86,159.7 L621.26,177.1 L621.38,174.6 L621.50,164.7 L621.62,163.3 L622.02,170.7 L622.42,175.1 L622.82,163.3 L622.94,167.4 L623.34,178.7 L623.46,174.6 L623.86,177.0 L624.26,180.1 L624.38,175.7 L624.78,170.7 L625.18,173.6 L625.58,176.6 L625.98,190.8 L626.10,190.9 L626.22,171.9 L626.34,177.7 L626.46,188.2 L626.86,170.0 L626.98,186.7 L627.38,169.0 L627.50,184.4 L627.62,182.9 L627.74,174.6 L628.14,178.5 L628.26,168.7 L628.66,164.5 L628.78,164.7 L629.18,167.7 L629.30,164.3 L629.70,178.1 L629.82,169.1 L629.94,170.0 L630.34,165.8 L630.74,166.1 L631.14,164.1 L631.26,167.9 L631.66,167.0 L632.06,170.7 L632.46,164.5 L632.86,167.0 L633.26,175.2 L633.66,171.1 L634.06,177.3 L634.18,174.1 L634.58,178.3 L634.70,185.6 L635.10,164.1 L635.22,182.6 L635.62,184.3 L635.74,162.9 L635.86,177.5 L636.26,175.1 L636.38,178.4 L636.78,174.7 L637.18,181.8 L637.30,171.6 L637.70,174.4 L638.10,173.8 L638.50,169.7 L638.90,185.6 L639.02,183.7 L639.14,170.3 L639.54,167.8 L639.94,180.5 L640.06,166.6 L640.46,167.8 L640.86,169.7 L640.98,161.4 L641.38,167.7 L641.78,161.9 L642.18,170.7 L642.58,168.0 L642.98,169.2 L643.10,170.7 L643.50,173.1 L643.90,181.4 L644.30,178.5 L644.70,170.9 L644.82,174.6 L645.22,177.1 L645.62,174.9 L646.02,177.7 L646.42,175.1 L646.54,175.1 L646.94,177.3 L647.34,175.5 L647.74,168.2 L647.86,169.1 L648.26,175.2 L648.66,165.2 L649.06,167.7 L649.46,161.2 L649.86,167.6 L649.98,163.7 L650.38,169.3 L650.50,166.2 L650.90,171.6 L651.30,169.9 L651.70,176.0 L652.10,173.5 L652.22,172.4 L652.62,180.9 L652.74,170.7 L653.14,176.1 L653.54,170.9 L653.94,168.1 L654.06,171.5 L654.46,173.3 L654.86,179.6 L655.26,182.3 L655.66,182.5 L656.06,178.1 L656.46,172.2 L656.86,175.3 L657.26,166.2 L657.66,165.5 L658.06,164.2 L658.46,168.0 L658.86,165.5 L659.26,170.5 L659.66,170.6 L660.06,169.5 L660.46,169.7 L660.86,168.8 L661.26,168.3 L661.66,169.5 L662.06,175.3 L662.46,172.1 L662.86,177.2 L663.26,177.7 L663.66,179.2 L664.06,177.1 L664.46,174.8 L664.86,173.9 L665.26,176.2 L665.66,174.4 L666.06,172.5 L666.46,169.5 L666.86,170.6 L667.26,167.8 L667.66,168.3 L668.06,170.3 L668.46,168.1 L668.86,167.8 L669.26,166.2 L669.66,168.3 L670.06,167.8 L670.46,168.7 L670.86,172.6 L671.26,177.5 L671.66,175.0 L672.06,179.0 L672.46,174.2 L672.86,172.4 L673.26,173.7 L673.66,175.9 L674.06,171.5 L674.46,174.4 L674.86,173.0 L675.26,169.9 L675.66,168.1 L676.06,166.8 L676.46,166.1 L676.86,166.9 L677.26,164.9 L677.66,169.7 L678.06,169.0 L678.46,174.3 L678.86,173.0 L679.26,175.8 L679.66,174.3 L680.06,172.3 L680.46,177.0 L680.86,175.8 L681.26,173.6 L681.66,174.2 L682.06,178.5 L682.46,176.2 L682.86,172.1 L683.26,174.3 L683.66,170.2 L684.06,168.1 L684.46,166.1 L684.86,169.8 L685.26,169.9 L685.66,168.1 L686.06,168.9 L686.46,171.0 L686.86,170.7 L687.26,172.7 L687.66,170.8 L688.06,169.9 L688.46,172.4 L688.86,174.4 L689.26,174.1 L689.66,176.3 L690.06,178.5 L690.46,175.1 L690.86,175.0 L691.26,173.3 L691.66,168.7 L692.06,170.2 L692.46,168.2 L692.86,171.9 L693.26,172.4 L693.66,172.0 L694.06,172.0 L694.46,168.8 L694.86,168.2 L695.26,167.6 L695.66,170.2 L696.06,173.1 L696.46,174.8 L696.86,177.6 L697.26,176.8 L697.66,176.8 L698.06,175.6 L698.46,176.8 L698.86,174.7 L699.26,173.3 L699.66,171.8 L700.06,171.6 L700.46,171.2 L700.86,171.8 L701.26,171.6 L701.66,170.6 L702.06,167.7 L702.46,170.1 L702.86,168.2 L703.26,166.5 L703.66,170.8 L704.06,172.2 L704.46,174.8 L704.86,176.2 L705.26,174.1 L705.66,174.6 L706.06,173.8 L706.46,172.7 L706.86,172.2 L707.26,172.3 L707.66,174.0 L708.06,176.2 L708.46,175.1 L708.86,174.9 L709.26,173.8 L709.66,169.5 L710.06,168.2 L710.46,169.9 L710.86,168.2 L711.26,171.2 L711.66,172.3 L712.06,174.2 L712.46,172.0 L712.86,171.4 L713.26,170.7 L713.66,172.1 L714.06,174.8 L714.46,176.3 L714.86,174.5 L715.26,174.1 L715.66,177.4 L716.06,175.6 L716.46,173.2 L716.86,171.0 L717.26,169.8 L717.66,171.5 L718.06,169.8 L718.46,168.6 L718.86,171.6 L719.26,170.3 L719.66,168.9 L720.06,172.4 L720.46,171.5 L720.86,170.8 L721.26,173.0 L721.66,171.8 L722.06,174.3 L722.46,175.9 L722.86,176.2 L723.26,176.4 L723.66,175.0 L724.06,174.4 L724.46,174.4 L724.86,171.0 L725.26,170.9 L725.66,171.3 L726.06,170.9 L726.46,173.3 L726.86,172.3 L727.26,169.0 L727.66,170.5 L728.06,167.8 L728.46,167.3 L728.86,170.4 L729.26,170.3 L729.66,172.1 L730.06,173.7 L730.46,174.2 L730.86,173.9 L731.26,174.1 L731.66,172.1 L732.06,174.9 L732.46,172.6 L732.86,174.4 L733.26,174.1 L733.66,173.0 L734.06,174.6 L734.46,173.5 L734.86,172.4 L735.26,171.3 L735.66,167.9 L736.06,168.2 L736.46,171.0 L736.86,170.3 L737.26,170.6 L737.66,172.2 L738.06,172.9 L738.46,173.9 L738.86,174.9 L739.26,173.1 L739.66,171.6 L740.06,173.5 L740.46,173.7 L740.86,173.0 L741.26,176.0 L741.66,173.5 L742.06,173.6 L742.46,175.8 L742.86,172.2 L743.26,171.1 L743.66,171.0 L744.06,169.3 L744.46,168.1 L744.86,171.7 L745.26,170.3 L745.66,172.5 L746.06,171.1 L746.46,169.9 L746.86,170.9 L747.26,172.2 L747.66,172.0 L748.06,172.2 L748.46,171.9 L748.86,174.1 L749.26,174.3 L749.66,176.1 L750.06,174.7 L750.46,176.4 L750.86,175.1 L751.26,172.8 L751.66,173.3 L752.06,172.5 L752.46,170.8 L752.86,171.3 L753.26,172.5 L753.66,172.7 L754.06,170.9 L754.46,170.0 L754.86,169.1 L755.26,168.2 L755.66,169.0 L756.06,169.4 L756.46,171.1 L756.86,173.3 L757.26,172.9 L757.66,172.9 L758.06,176.0 L758.46,175.1 L758.86,173.0 L759.26,175.0 L759.66,172.9 L760.06,173.7 L760.46,173.1 L760.86,172.9 L761.26,174.0 L761.66,173.8 L762.06,171.0 L762.46,171.8 L762.86,168.1 L763.26,170.0 L763.66,169.9 L764.06,169.3 L764.46,171.3 L764.86,171.7 L765.26,174.2 L765.66,172.8 L766.06,173.2 L766.46,173.5 L766.86,173.5 L767.26,174.4 L767.66,173.5 L768.06,173.6 L768.46,175.3 L768.86,174.7 L769.26,173.4 L769.66,175.1 L770.06,172.0 L770.46,170.8 L770.86,170.7 L771.26,170.4 L771.66,168.8 L772.06,168.4 L772.46,170.9 L772.86,172.5 L773.26,172.9 L773.66,172.3 L774.06,173.5 L774.46,170.7 L774.86,172.1 L775.26,174.2 L775.66,174.7 L776.06,176.3 L776.46,176.2 L776.86,174.8 L777.26,174.1 L777.66,174.1 L778.06,170.5 L778.46,171.5 L778.86,171.9 L779.26,170.0" fill="none" stroke="#000" stroke-width="0.9"/>
<line x1="378" y1="172.3" x2="780" y2="172.3" stroke="#2020a8" stroke-width="1.3"/>
<polygon points="367,172.3 383,164 383,180.6" fill="#0000dd"/>
<rect x="611.7" y="266.8" width="155.3" height="41.6" fill="#c0b8ff"/>
<text x="620" y="284" font-family="Liberation Serif" font-size="10.1" fill="#1a1a40">Distance to Epicenter: 5.2°</text>
<text x="711" y="300.5" font-family="Liberation Serif" font-size="10.2" fill="#1a1a40">582 km</text>
<line x1="333.5" y1="320" x2="333.5" y2="362" stroke="#999" stroke-width="1"/>
</svg>
<div style="position:absolute;left:5px;top:35px;width:790px;height:328px;border-top:2px solid #bcbcbc;border-left:2px solid #9c9c9c;border-right:1px solid #a8a8a8;border-bottom:1px solid #848484;box-sizing:border-box"></div>
<div style="position:absolute;left:5px;top:35px;width:328px;height:2px;background:#9c9c9c"></div>
<div style="position:absolute;left:333px;top:35px;width:1px;height:327px;background:#a0a0a0"></div>
<div style="position:absolute;left:6px;top:319px;width:66px;height:43px;background:#ffffff"></div>
<div style="position:absolute;left:72px;top:320px;width:261px;height:42px;background:#efefef"></div>
<svg width="800" height="600" style="position:absolute;left:0;top:0">
<g fill="#1f62cc">
<polygon points="28,325.8 33,330.8 30.8,330.8 30.8,336.2 25.2,336.2 25.2,330.8 23,330.8"/>
<polygon points="28,357.6 33,352.4 30.8,352.4 30.8,347 25.2,347 25.2,352.4 23,352.4"/>
<polygon points="12.1,341.4 17.3,336.4 17.3,338.6 22.8,338.6 22.8,344.2 17.3,344.2 17.3,346.4"/>
<polygon points="43.9,341.4 38.7,336.4 38.7,338.6 33.2,338.6 33.2,344.2 38.7,344.2 38.7,346.4"/>
<rect x="14.5" y="328.2" width="7.2" height="7.2"/>
<rect x="34.3" y="328.2" width="7.2" height="7.2"/>
<rect x="14.5" y="347.4" width="7.2" height="7.2"/>
<rect x="34.3" y="347.4" width="7.2" height="7.2"/>
</g>
<g stroke="#ffffff" stroke-width="1.1">
<line x1="18.5" y1="332" x2="22" y2="335.6"/>
<line x1="37.5" y1="332" x2="34" y2="335.6"/>
<line x1="18.5" y1="350.8" x2="22" y2="347.2"/>
<line x1="37.5" y1="350.8" x2="34" y2="347.2"/>
</g>
<rect x="22.9" y="336" width="10.2" height="10.8" fill="#1c4c9e"/>
<rect x="25.6" y="339" width="4.9" height="4.9" fill="#2a5aa0" stroke="#a8bccc" stroke-width="1"/>
</svg>
<svg width="18" height="32" style="position:absolute;left:51.5px;top:326.3px">
<circle cx="6.5" cy="6.5" r="4.5" fill="#e2eaf2" stroke="#34465e" stroke-width="1.6"/>
<line x1="9.8" y1="9.8" x2="13.6" y2="13.6" stroke="#2a4060" stroke-width="2.1"/>
<path d="M4,6.5 H9 M6.5,4 V9" stroke="#1a3f78" stroke-width="2.2"/>
<circle cx="6.5" cy="20.5" r="4.5" fill="#e2eaf2" stroke="#34465e" stroke-width="1.6"/>
<line x1="9.8" y1="23.8" x2="13.6" y2="27.6" stroke="#2a4060" stroke-width="2.1"/>
<path d="M3.8,20.5 H9.2" stroke="#1a3f78" stroke-width="2.4"/>
</svg>
<div class="btn" style="left:77px;top:333px;width:79px;height:17px;font-size:9px;line-height:15px">Reset Center</div>
<div class="btn" style="left:163px;top:333px;width:73px;height:17px;font-size:9px;line-height:15px">Reset Zoom</div>
<div style="position:absolute;left:5px;top:362px;width:790px;height:149px;background:#fff;border:1px solid #8a8a8a;box-sizing:border-box"></div>
<div style="position:absolute;left:779px;top:363px;width:15px;height:147px;background:#f0f0f0"></div>
<div style="position:absolute;left:786px;top:423px;width:2px;height:73px;background:#a8a8a8"></div>
<div style="position:absolute;left:6px;top:363px;width:773px;height:21px;background:#fbfbfb"></div>
<div style="position:absolute;left:6px;top:384px;width:773px;height:1px;background:#ececec"></div>
<div style="position:absolute;left:6px;top:468px;width:773px;height:42px;background:#0a74d6"></div>
<div style="position:absolute;left:6px;top:426px;width:773px;height:1px;background:#d8d8d8"></div>
<div style="position:absolute;left:6px;top:468px;width:773px;height:1px;background:#d8d8d8"></div>
<div style="position:absolute;left:95px;top:363px;width:1px;height:105px;background:#dcdcdc"></div>
<div style="position:absolute;left:95px;top:468px;width:1px;height:42px;background:#5a9ee6"></div>
<div style="position:absolute;left:186px;top:363px;width:1px;height:105px;background:#dcdcdc"></div>
<div style="position:absolute;left:186px;top:468px;width:1px;height:42px;background:#5a9ee6"></div>
<div style="position:absolute;left:260px;top:363px;width:1px;height:105px;background:#dcdcdc"></div>
<div style="position:absolute;left:260px;top:468px;width:1px;height:42px;background:#5a9ee6"></div>
<div style="position:absolute;left:353px;top:363px;width:1px;height:105px;background:#dcdcdc"></div>
<div style="position:absolute;left:353px;top:468px;width:1px;height:42px;background:#5a9ee6"></div>
<div style="position:absolute;left:450px;top:363px;width:1px;height:105px;background:#dcdcdc"></div>
<div style="position:absolute;left:450px;top:468px;width:1px;height:42px;background:#5a9ee6"></div>
<div style="position:absolute;left:535px;top:363px;width:1px;height:105px;background:#dcdcdc"></div>
<div style="position:absolute;left:535px;top:468px;width:1px;height:42px;background:#5a9ee6"></div>
<div style="position:absolute;left:633px;top:363px;width:1px;height:105px;background:#dcdcdc"></div>
<div style="position:absolute;left:633px;top:468px;width:1px;height:42px;background:#5a9ee6"></div>
<div style="position:absolute;left:718px;top:363px;width:1px;height:105px;background:#dcdcdc"></div>
<div style="position:absolute;left:718px;top:468px;width:1px;height:42px;background:#5a9ee6"></div>
<div class="t" style="left:9px;top:371px;font-size:9.2px;color:#222;">Station ID</div>
<div class="t" style="left:99px;top:371px;font-size:9.2px;color:#222;">Station Name</div>
<div class="t" style="left:190px;top:371px;font-size:9.2px;color:#222;">Location</div>
<div class="t" style="left:264px;top:371px;font-size:9.2px;color:#222;">Lat/Lon</div>
<div class="t" style="left:357px;top:371px;font-size:9.2px;color:#222;">Distance</div>
<div class="t" style="left:454px;top:371px;font-size:9.2px;color:#222;">Magnitude</div>
<div class="t" style="left:539px;top:371px;font-size:9.2px;color:#222;">Filter</div>
<div class="t" style="left:637px;top:371px;font-size:9.2px;color:#222;">Start Time</div>
<div class="t" style="left:722px;top:371px;font-size:9.2px;color:#222;">Device Type</div>
<div class="t" style="left:6px;top:400.5px;font-size:9px;color:#1e1e1e;letter-spacing:-0.6px">4GRET</div>
<div class="t" style="left:96px;top:400.5px;font-size:9px;color:#1e1e1e;letter-spacing:0px">4 GYMNASIO RETH...</div>
<div class="t" style="left:187px;top:400.5px;font-size:9px;color:#1e1e1e;letter-spacing:0px">Rethymnon, GR</div>
<div class="t" style="left:261px;top:400.5px;font-size:9px;color:#1e1e1e;letter-spacing:0.38px">(35.36, 24.48)</div>
<div class="t" style="left:354px;top:400.5px;font-size:9px;color:#1e1e1e;letter-spacing:0.1px">3.41°378.72 km</div>
<div class="t" style="left:451px;top:400.5px;font-size:9px;color:#1e1e1e;letter-spacing:0px">Not Computed</div>
<div class="t" style="left:536px;top:400.5px;font-size:9px;color:#1e1e1e;letter-spacing:0px">None</div>
<div class="t" style="left:634px;top:400.5px;font-size:9px;color:#1e1e1e;letter-spacing:0.33px">03/29/2024 07:12</div>
<div class="t" style="left:719px;top:400.5px;font-size:9px;color:#1e1e1e;letter-spacing:0px">TC-1</div>
<div class="t" style="left:6px;top:442.5px;font-size:9px;color:#1e1e1e;letter-spacing:0px">LCIG</div>
<div class="t" style="left:96px;top:442.5px;font-size:9px;color:#1e1e1e;letter-spacing:0px">LCIG</div>
<div class="t" style="left:187px;top:442.5px;font-size:9px;color:#1e1e1e;letter-spacing:0px">Igoumenitsa, G...</div>
<div class="t" style="left:261px;top:442.5px;font-size:9px;color:#1e1e1e;letter-spacing:0.38px">(39.5, 20.27)</div>
<div class="t" style="left:354px;top:442.5px;font-size:9px;color:#1e1e1e;letter-spacing:0.1px">2.64°293.16 km</div>
<div class="t" style="left:451px;top:442.5px;font-size:9px;color:#1e1e1e;letter-spacing:0px">Not Computed</div>
<div class="t" style="left:536px;top:442.5px;font-size:9px;color:#1e1e1e;letter-spacing:0px">None</div>
<div class="t" style="left:634px;top:442.5px;font-size:9px;color:#1e1e1e;letter-spacing:0.33px">03/29/2024 07:12</div>
<div class="t" style="left:719px;top:442.5px;font-size:9px;color:#1e1e1e;letter-spacing:0px">SEP</div>
<div class="t" style="left:6px;top:484.5px;font-size:9px;color:#ffffff;letter-spacing:0px">JCMT</div>
<div class="t" style="left:96px;top:484.5px;font-size:9px;color:#ffffff;letter-spacing:0.24px">G. F. Abela Junior ...</div>
<div class="t" style="left:187px;top:484.5px;font-size:9px;color:#ffffff;letter-spacing:0px">Msida, Malta</div>
<div class="t" style="left:261px;top:484.5px;font-size:9px;color:#ffffff;letter-spacing:0.3px">(35.892, 14.489)</div>
<div class="t" style="left:354px;top:484.5px;font-size:9px;color:#ffffff;letter-spacing:0.1px">5.24°582.14 km</div>
<div class="t" style="left:451px;top:484.5px;font-size:9px;color:#ffffff;letter-spacing:0px">Not Computed</div>
<div class="t" style="left:536px;top:484.5px;font-size:9px;color:#ffffff;letter-spacing:0px">None</div>
<div class="t" style="left:634px;top:484.5px;font-size:9px;color:#ffffff;letter-spacing:0.33px">03/29/2024 07:13</div>
<div class="t" style="left:719px;top:484.5px;font-size:9px;color:#ffffff;letter-spacing:0px">SEP</div>
<div style="position:absolute;left:7px;top:518px;width:787px;height:52px;border-left:1px solid #8a8a8a;border-top:1px solid #8a8a8a;box-sizing:border-box"></div>
<div style="position:absolute;left:10px;top:512px;width:65px;height:12px;background:#fff"></div>
<div class="t" style="left:12px;top:514px;font-size:9px;color:#222;">Station Actions</div>
<div class="btn" style="left:108px;top:526.5px;width:137px;height:17px;font-size:9px;line-height:15px">Change Station Information</div>
<div class="btn" style="left:247.5px;top:526.5px;width:97px;height:17px;font-size:9px;line-height:15px">Compute Distance</div>
<div class="btn" style="left:347.5px;top:526.5px;width:105px;height:17px;font-size:9px;line-height:15px">Compute Magnitude</div>
<div class="btn" style="left:457px;top:526.5px;width:59px;height:17px;font-size:9px;line-height:15px">Set Filter</div>
<div class="btn" style="left:519.5px;top:526.5px;width:78px;height:17px;font-size:9px;line-height:15px">Edit Selection</div>
<div class="btn" style="left:601.5px;top:526.5px;width:88.5px;height:17px;font-size:9px;line-height:15px">Remove Station</div>
<div class="t" style="left:18px;top:552px;font-size:9px;color:#222;">Zoom:</div>
<div style="position:absolute;left:44px;top:545px;width:326px;height:21px;background:#eeeeee"></div>
<div style="position:absolute;left:48px;top:554px;width:320px;height:3px;background:#e4e4e4"></div>
<div style="position:absolute;left:45px;top:547px;width:4px;height:17px;background:#0a74d6;border-radius:1px"></div>
<div class="t" style="left:379px;top:552px;font-size:9px;color:#222;">Number of Degrees:</div>
<div style="position:absolute;left:462px;top:545px;width:328px;height:21px;background:#eeeeee"></div>
<div style="position:absolute;left:466px;top:554px;width:320px;height:3px;background:#e4e4e4"></div>
<div style="position:absolute;left:472.5px;top:547px;width:4px;height:17px;background:#0a74d6;border-radius:1px"></div>
<div class="btn" style="left:6px;top:572px;width:72px;height:17px;font-size:9px;line-height:15px">Add Station</div>
<div class="btn" style="left:81px;top:572px;width:101px;height:17px;font-size:9px;line-height:15px">Go To Stream View</div>
<div class="btn" style="left:368px;top:572px;width:68.5px;height:17px;font-size:9px;line-height:15px">Hide Globe</div>
<div class="btn" style="left:623px;top:572px;width:82px;height:17px;font-size:9px;line-height:15px">Create Report</div>
<div class="btn" style="left:708px;top:572px;width:40px;height:17px;font-size:9px;line-height:15px">FFT</div>
<div class="btn" style="left:750.5px;top:572px;width:42px;height:17px;font-size:9px;line-height:15px">Help</div>
<div style="position:absolute;left:0;top:599px;width:800px;height:1px;background:#a0a0a0"></div>
</body></html>
